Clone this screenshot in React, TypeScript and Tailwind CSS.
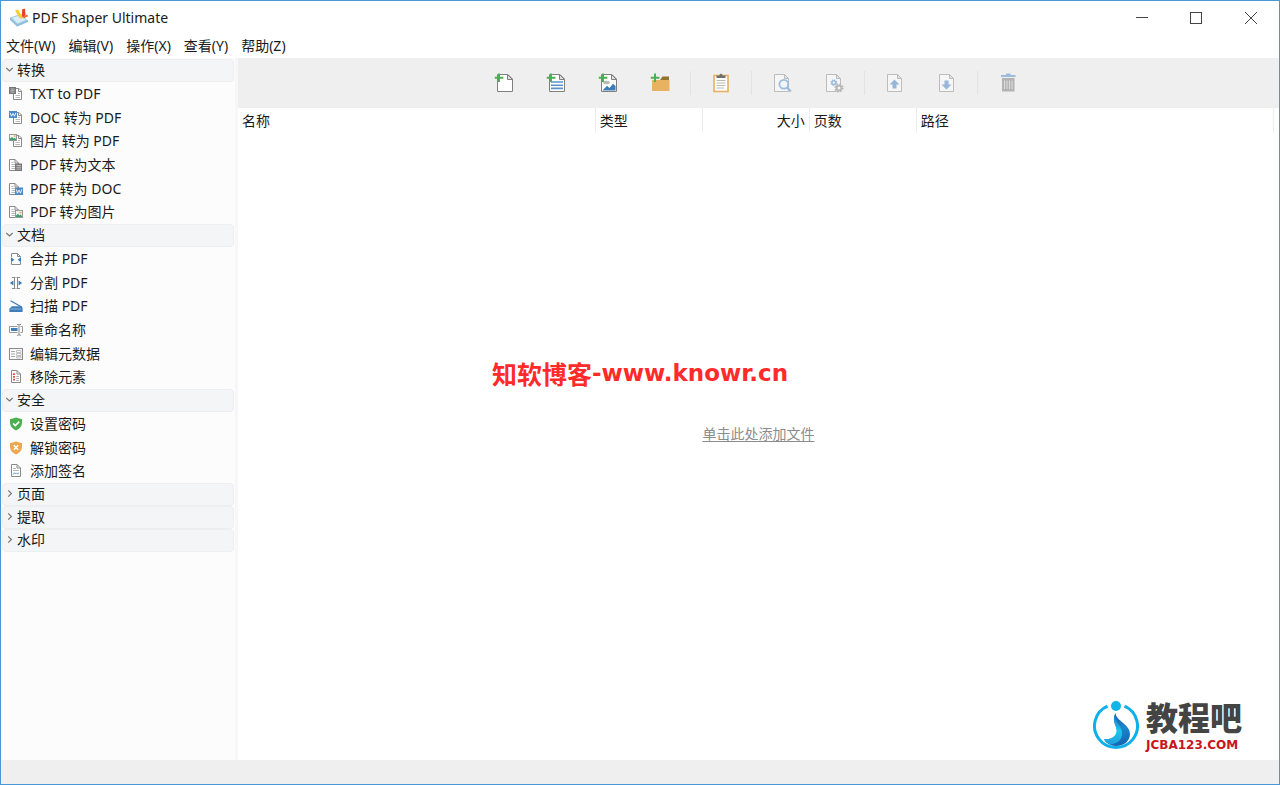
import { useState, type ReactNode } from "react";

const GRAY = "#8a8a8a";
const BLUE = "#3f7cba";

function Small({ children }: { children: ReactNode }) {
  return (
    <svg viewBox="0 0 14 14" className="size-3.5 shrink-0" fill="none" aria-hidden="true">
      {children}
    </svg>
  );
}

function FromPage({ children }: { children: ReactNode }) {
  return (
    <Small>
      <path d="M4.5 1.5H10L12.5 4V12.5H4.5Z" fill="#fff" stroke={GRAY} />
      <path d="M9.5 1.5V4.5H12.5" stroke={GRAY} />
      <path d="M6.5 8.5H11M6.5 10.5H11M9 6.5H11" stroke="#b9b9b9" />
      {children}
    </Small>
  );
}

function ToPage({ children }: { children: ReactNode }) {
  return (
    <Small>
      <path d="M7.5 12.5H0.5V1.5H6L9.5 5V7" fill="#fff" stroke={GRAY} />
      <path d="M6 1.5V5H9.5" stroke={GRAY} />
      <path d="M2.5 4.5H4.5M2.5 6.5H6.5M2.5 8.5H6M2.5 10.5H6" stroke="#b9b9b9" />
      {children}
    </Small>
  );
}

const icons: Record<string, ReactNode> = {
  txtToPdf: (
    <FromPage>
      <rect x="0" y="0" width="7" height="7" fill="#777" />
      <path d="M1.5 2H5.5M1.5 3.6H5.5M1.5 5.2H5.5" stroke="#ddd" strokeWidth=".7" />
    </FromPage>
  ),
  docToPdf: (
    <FromPage>
      <rect x="0" y="0" width="8" height="7" fill="#4a88c7" />
      <path d="M1.2 1.8L2.5 5.2L4 2.4L5.5 5.2L6.8 1.8" stroke="#fff" strokeWidth=".9" />
    </FromPage>
  ),
  imgToPdf: (
    <FromPage>
      <rect x=".5" y=".5" width="7" height="6" fill="#f2f6f2" stroke="#999" />
      <path d="M1 6.2V4.5L3 3L4.5 4.5L5.5 3.8L7 5V6.2Z" fill="#3e9e6e" />
      <rect x="4.8" y="1.4" width="1.8" height="1.4" fill="#e9a24b" />
    </FromPage>
  ),
  pdfToTxt: (
    <ToPage>
      <rect x="6" y="5.5" width="7" height="7.5" fill="#777" />
      <path d="M7.5 7.5H12M7.5 9.3H12M7.5 11.1H12" stroke="#ddd" strokeWidth=".7" />
    </ToPage>
  ),
  pdfToDoc: (
    <ToPage>
      <rect x="6" y="5.5" width="8" height="7.5" fill="#4a88c7" />
      <path d="M7.2 7.3L8.5 11.2L10 8L11.5 11.2L12.8 7.3" stroke="#fff" strokeWidth=".9" />
    </ToPage>
  ),
  pdfToImg: (
    <ToPage>
      <rect x="6.5" y="5.5" width="7" height="7" fill="#f2f6f2" stroke="#999" />
      <path d="M7 12V10.5L9 8.8L10.5 10.5L11.5 9.5L13 11V12Z" fill="#3e9e6e" />
      <rect x="10.5" y="6.8" width="2" height="1.6" fill="#e9a24b" />
    </ToPage>
  ),
  merge: (
    <Small>
      <path d="M2.5 12.5V1.5H8.5L11.5 4.5V12.5Z" fill="#fff" />
      <path d="M2.5 5V1.5H8.5L11.5 4.5V5.5M8.5 1.5V4.5H11.5M2.5 10V12.5H11.5V10" stroke={GRAY} />
      <path d="M2 5.2L5.4 7.7L2 10.2ZM12 5.2L8.6 7.7L12 10.2Z" fill={BLUE} />
    </Small>
  ),
  split: (
    <Small>
      <path d="M3 1.5H6.5M3 12.5H6.5M5.5 1.5V12.5M11 1.5H7.5M11 12.5H7.5M8.5 1.5V12.5" stroke={GRAY} />
      <path d="M4.4 4.6V9.4L.8 7ZM9.6 4.6V9.4L13.2 7Z" fill={BLUE} />
    </Small>
  ),
  scan: (
    <Small>
      <path d="M1.6 1.8L12.6 8" stroke={BLUE} strokeWidth="1.3" />
      <path d="M3 7.2H12.6L13.6 9V13H.4V9.4Z" fill={BLUE} />
      <path d="M1.5 10H12.5" stroke="#9cc3e6" strokeWidth=".8" />
    </Small>
  ),
  rename: (
    <Small>
      <path d="M8.5 3.5H.5V9.5H8.5M11.5 3.5H13.5V9.5H11.5" stroke="#999" />
      <rect x="2" y="5" width="6.5" height="3" fill={BLUE} />
      <path d="M8 1.5H9.5L10 2L10.5 1.5H12M10 2V11.5M8 12.2H9.5L10 11.5L10.5 12.2H12" stroke="#777" strokeWidth=".9" />
    </Small>
  ),
  metadata: (
    <Small>
      <rect x=".5" y="1.5" width="13" height="11" fill="#fafafa" stroke={GRAY} />
      <path d="M2 4.5H6M2 7H6M2 9.5H6" stroke="#aaa" />
      <path d="M7.5 3.5H12V5.5H7.5ZM7.5 6.5H12V8.5H7.5ZM7.5 9.5H12V11H7.5Z" stroke="#b5b5b5" strokeWidth=".8" />
    </Small>
  ),
  remove: (
    <Small>
      <path d="M2.5 .5H8L11.5 4V12.5H2.5Z" fill="#fff" stroke={GRAY} />
      <path d="M8 .5V4H11.5" stroke={GRAY} />
      <path d="M5 3.2V11" stroke="#dc5a4a" strokeWidth="2" strokeDasharray="1.8 1" />
      <path d="M7.2 6.5H10M7.2 8.5H10M7.2 10.5H10" stroke="#9a9a9a" strokeWidth=".8" />
    </Small>
  ),
  lock: (
    <Small>
      <path d="M7 .6L13 2.2V5.5C13 9.3 10.6 11.8 7 13.4C3.4 11.8 1 9.3 1 5.5V2.2Z" fill="#4caf50" />
      <path d="M4 6.4L6.3 8.6L10.2 4.6" stroke="#fff" strokeWidth="1.6" />
    </Small>
  ),
  unlock: (
    <Small>
      <path d="M7 .6L13 2.2V5.5C13 9.3 10.6 11.8 7 13.4C3.4 11.8 1 9.3 1 5.5V2.2Z" fill="#eda750" />
      <path d="M4.8 4.3L9.2 8.7M9.2 4.3L4.8 8.7" stroke="#fff" strokeWidth="1.6" />
    </Small>
  ),
  sign: (
    <Small>
      <path d="M2.5 .5H8L11.5 4V12.5H2.5Z" fill="#fff" stroke={GRAY} />
      <path d="M8 .5V4H11.5" stroke={GRAY} />
      <path d="M4 4.5H7M4 6.5H10" stroke="#b5b5b5" />
      <path d="M4 10.6C5 8.4 6 8.4 6 10C7 8.6 7.6 9.2 8 9.8L10 9" stroke="#5a93cc" strokeWidth=".9" />
    </Small>
  ),
};

const groups = [
  {
    name: "转换",
    height: "h-[142px]",
    items: [
      ["txtToPdf", "TXT to PDF"],
      ["docToPdf", "DOC 转为 PDF"],
      ["imgToPdf", "图片 转为 PDF"],
      ["pdfToTxt", "PDF 转为文本"],
      ["pdfToDoc", "PDF 转为 DOC"],
      ["pdfToImg", "PDF 转为图片"],
    ],
  },
  {
    name: "文档",
    height: "h-[142px]",
    items: [
      ["merge", "合并 PDF"],
      ["split", "分割 PDF"],
      ["scan", "扫描 PDF"],
      ["rename", "重命名称"],
      ["metadata", "编辑元数据"],
      ["remove", "移除元素"],
    ],
  },
  {
    name: "安全",
    height: "h-[71px]",
    items: [
      ["lock", "设置密码"],
      ["unlock", "解锁密码"],
      ["sign", "添加签名"],
    ],
  },
  { name: "页面", height: "", items: [] },
  { name: "提取", height: "", items: [] },
  { name: "水印", height: "", items: [] },
];

function Group({ name, height, items }: { name: string; height: string; items: string[][] }) {
  const [open, setOpen] = useState(items.length > 0);
  return (
    <section>
      <button
        type="button"
        aria-expanded={open}
        onClick={() => setOpen(!open)}
        className="flex h-[23px] w-full items-center gap-[3px] rounded-sm border border-[#eceef0] bg-[#f4f5f7] pb-0.5 pl-0.5 text-left"
      >
        <svg viewBox="0 0 9 9" className="size-[9px]" fill="none" stroke="#777" strokeWidth="1.2" aria-hidden="true">
          <path d={open ? "M1.3 3L4.5 6L7.7 3" : "M3.2 1.3L6.4 4.5L3.2 7.7"} />
        </svg>
        {name}
      </button>
      {open && items.length > 0 && (
        <ul className={`flex flex-col ${height}`}>
          {items.map(([icon, label]) => (
            <li key={label} className="flex flex-1">
              <button type="button" className="flex w-full items-center gap-[7px] pl-[7px] text-left">
                {icons[icon]}
                {label}
              </button>
            </li>
          ))}
        </ul>
      )}
    </section>
  );
}

function Sheet() {
  return (
    <>
      <path d="M3.5 1.5H14L18.5 6V18.5H3.5Z" fill="#fff" stroke="#808080" />
      <path d="M13.5 1.5V6.5H18.5Z" fill="#ddd" stroke="#808080" />
    </>
  );
}

function Plus() {
  return <path d="M5 .5V9M.8 4.7H9.4" stroke="#4caf50" strokeWidth="2" />;
}

function FadedSheet() {
  return (
    <>
      <path d="M2.5 1.5H12.5L16.5 5.5V18.5H2.5Z" fill="#f6f6f6" stroke="#bcbcbc" />
      <path d="M12.5 1.5V5.5H16.5Z" fill="#e2e2e2" stroke="#bcbcbc" />
    </>
  );
}

const tools: { label: string; divider?: boolean; art: ReactNode }[] = [
  { label: "添加文件", art: <><Sheet /><Plus /></> },
  {
    label: "添加文本",
    art: (
      <>
        <Sheet />
        <path d="M5 9H17M5 12.2H17M5 15.4H17" stroke="#5c93cb" strokeWidth="1.6" />
        <Plus />
      </>
    ),
  },
  {
    label: "添加图片",
    art: (
      <>
        <Sheet />
        <ellipse cx="8.5" cy="9.5" rx="3.4" ry="1.8" fill="#b9b9b9" />
        <path d="M4.5 17.5L9 12.8L11.5 15L15 10.8L17.5 13V17.5Z" fill={BLUE} />
        <Plus />
      </>
    ),
  },
  {
    label: "添加文件夹",
    art: (
      <>
        <path d="M10 7L12.5 3.5H19V8H10Z" fill="#94742c" />
        <path d="M2 7H19.5V18H2Z" fill="#e8b361" />
        <Plus />
      </>
    ),
  },
  {
    label: "粘贴",
    divider: true,
    art: (
      <>
        <rect x="3" y="2.5" width="14" height="16" fill="#fff" stroke="#eaae5c" strokeWidth="1.6" />
        <path d="M5.5 5V2.6H8.5C8.6 .2 11.4 .2 11.5 2.6H14.5V5Z" fill="#707070" />
        <path d="M5.5 7.5H14.5M5.5 10H14.5M5.5 12.5H14.5M5.5 15H13" stroke="#b9b9b9" />
      </>
    ),
  },
  {
    label: "预览",
    divider: true,
    art: (
      <>
        <FadedSheet />
        <circle cx="11.8" cy="11.2" r="4.4" fill="#f1f5fa" stroke="#9dbcdc" strokeWidth="1.8" />
        <path d="M15 14.5L18.8 18.5" stroke="#9dbcdc" strokeWidth="2.4" />
      </>
    ),
  },
  {
    label: "属性",
    art: (
      <>
        <FadedSheet />
        <circle cx="9.8" cy="9.6" r="2.8" stroke="#9dbcdc" strokeWidth="1.2" strokeDasharray="1.2 1" />
        <circle cx="9.8" cy="9.6" r="1.9" stroke="#9dbcdc" strokeWidth="1.5" />
        <circle cx="15" cy="15" r="3.8" fill="#eee" stroke="#b6b6b6" strokeWidth="1.6" strokeDasharray="1.6 1.38" />
        <circle cx="15" cy="15" r="2.4" fill="#f4f4f4" stroke="#b6b6b6" strokeWidth="1.8" />
      </>
    ),
  },
  {
    label: "上移",
    divider: true,
    art: <><FadedSheet /><path d="M9.5 6.5L14.5 11.5H11.5V15.5H7.5V11.5H4.5Z" fill="#97b6d8" /></>,
  },
  {
    label: "下移",
    art: <><FadedSheet /><path d="M9.5 16.5L14.5 11.5H11.5V7.5H7.5V11.5H4.5Z" fill="#97b6d8" /></>,
  },
  {
    label: "清空",
    divider: true,
    art: (
      <>
        <path d="M3 3H17.5M8 1.5H12.5" stroke="#9dbcdc" strokeWidth="2" />
        <path d="M4 5H16.5V18.5H4Z" fill="#b3b3b3" />
        <path d="M6.5 7.5V16M9 7.5V16M11.5 7.5V16M14 7.5V16" stroke="#dedede" />
      </>
    ),
  },
];

const menus = ["文件(W)", "编辑(V)", "操作(X)", "查看(Y)", "帮助(Z)"];

const cell = "border-r border-[#ececec] px-1 font-normal";

export default function App() {
  return (
    <div className="relative flex min-h-screen flex-col border border-[#4a97d8] bg-white font-['Noto_Sans','Noto_Sans_CJK_SC',sans-serif] text-sm leading-5 text-[#1a1a1a]">
      <header className="flex h-[33px] items-center justify-between">
        <div className="flex items-center gap-[3px] pl-2">
          <svg viewBox="0 0 20 20" className="size-5" aria-hidden="true">
            <path d="M1 9.5L12 6L19 13L8 18.5Z" fill="#9fcbe4" />
            <path d="M1 9.5L8 16.5V18.5L1 12ZM8 16.5L19 12V14L8 18.5Z" fill="#8fbfdb" />
            <path d="M3 9.8L12.5 7L16.5 12L8.5 15.5Z" fill="#d9eef8" />
            <path d="M6 2.5L9 1.5L13.5 9L13 11L10.5 10Z" fill="#f8ce2c" />
            <path d="M13.2 1.2L16 .8L16.5 7L14 9.8L12.8 8Z" fill="#e8402c" />
            <path d="M14.5 8L18.5 6.5L18.8 8.5L14.5 10.5Z" fill="#ee6a3a" />
          </svg>
          <h1>PDF Shaper Ultimate</h1>
        </div>
        <div className="flex items-center">
          <button type="button" aria-label="最小化" className="grid h-8 w-[54px] place-items-center">
            <svg viewBox="0 0 12 12" className="size-3" stroke="#444"><path d="M0 5.5H12" /></svg>
          </button>
          <button type="button" aria-label="最大化" className="grid h-8 w-[54px] place-items-center">
            <svg viewBox="0 0 12 12" className="size-3" fill="none" stroke="#444"><rect x=".5" y=".5" width="11" height="11" /></svg>
          </button>
          <button type="button" aria-label="关闭" className="grid h-8 w-14 place-items-center">
            <svg viewBox="0 0 12 12" className="size-3" stroke="#444"><path d="M0 0L12 12M12 0L0 12" /></svg>
          </button>
        </div>
      </header>

      <nav className="flex h-6 items-center gap-[13px] pl-[5px]">
        {menus.map((m) => (
          <button type="button" key={m}>{m}</button>
        ))}
      </nav>

      <div className="flex flex-1">
        <aside className="w-[237px] shrink-0 border-r-3 border-[#f7f7f7] bg-[#fcfcfc] pt-px pr-px pl-px">
          {groups.map((g) => (
            <Group key={g.name} {...g} />
          ))}
        </aside>

        <main className="flex min-w-0 flex-1 flex-col">
          <div role="toolbar" className="flex h-[50px] items-center justify-center bg-[#efefef] pr-1.5">
            {tools.map((t) => (
              <div key={t.label} className="flex items-center">
                {t.divider && <span className="mx-1 h-6 w-px bg-[#e3e3e3]" />}
                <button type="button" aria-label={t.label} className="grid h-10 w-[52px] place-items-center">
                  <svg viewBox="0 0 20 20" className="size-5" fill="none" aria-hidden="true">{t.art}</svg>
                </button>
              </div>
            ))}
          </div>
          <div className="pr-[5px]">
            <table className="w-full table-fixed border-collapse text-left">
              <thead>
                <tr className="h-[25px]">
                  <th className={cell}>名称</th>
                  <th className={`${cell} w-[107px]`}>类型</th>
                  <th className={`${cell} w-[107px] text-right`}>大小</th>
                  <th className={`${cell} w-[107px]`}>页数</th>
                  <th className={cell}>路径</th>
                </tr>
              </thead>
            </table>
          </div>
          <div className="flex flex-1 items-center justify-center pb-[25px]">
            <a href="#add" className="text-[#8c8c8c] underline underline-offset-2">单击此处添加文件</a>
          </div>
        </main>
      </div>

      <footer className="h-6 bg-[#efefef]" />

      <div className="pointer-events-none absolute top-[356px] left-1/2 flex h-8 -translate-x-1/2 items-center font-bold whitespace-nowrap text-[#ff2a2a]">
        <span className="font-['Noto_Sans_CJK_SC',sans-serif] text-[25px]">知软博客</span>
        <span className="font-['DejaVu_Sans',sans-serif] text-[23px]">-www.knowr.cn</span>
      </div>

      <div className="pointer-events-none absolute right-[37px] bottom-8 flex items-center gap-1.5">
        <svg viewBox="0 0 48 52" className="h-[52px] w-12" fill="none" aria-hidden="true">
          <defs>
            <linearGradient id="drop" x1="24" y1="14" x2="32" y2="44" gradientUnits="userSpaceOnUse">
              <stop offset="0" stopColor="#1a62b0" />
              <stop offset=".5" stopColor="#1b86cc" />
              <stop offset="1" stopColor="#1466b4" />
            </linearGradient>
            <linearGradient id="wave" x1="24" y1="14" x2="18" y2="44" gradientUnits="userSpaceOnUse">
              <stop offset="0" stopColor="#1a6fba" />
              <stop offset=".5" stopColor="#1fc4ee" />
              <stop offset="1" stopColor="#1fa0dc" />
            </linearGradient>
          </defs>
          <path d="M15.5 6.2A21.5 21.5 0 1 0 32.5 6.2" stroke="#0fb0ea" strokeWidth="3" />
          <circle cx="24" cy="6" r="5" fill="#12b5e8" />
          <path d="M23.500 13C24 21 38 24 38 34C38 41 32 46 24 46C18 46 14 43 12 39.500C20 40 26 36 25 30C24 25 20 21 23.500 13Z" fill="url(#drop)" />
          <path d="M23.500 13C19.500 21 24 24 24.500 30C25 36 19 40 12 39C13.500 42 16 44 19 44.500C27 43 31 38 30 32C29 25 22 22 23.500 13Z" fill="url(#wave)" />
        </svg>
        <div className="flex flex-col gap-1.5">
          <span className="font-['Noto_Sans_CJK_SC',sans-serif] text-[32px] leading-8 font-black text-[#444]">教程吧</span>
          <span className="font-['DejaVu_Sans',sans-serif] text-xs leading-[14px] font-bold text-[#c8161d]">JCBA123.COM</span>
        </div>
      </div>
    </div>
  );
}
